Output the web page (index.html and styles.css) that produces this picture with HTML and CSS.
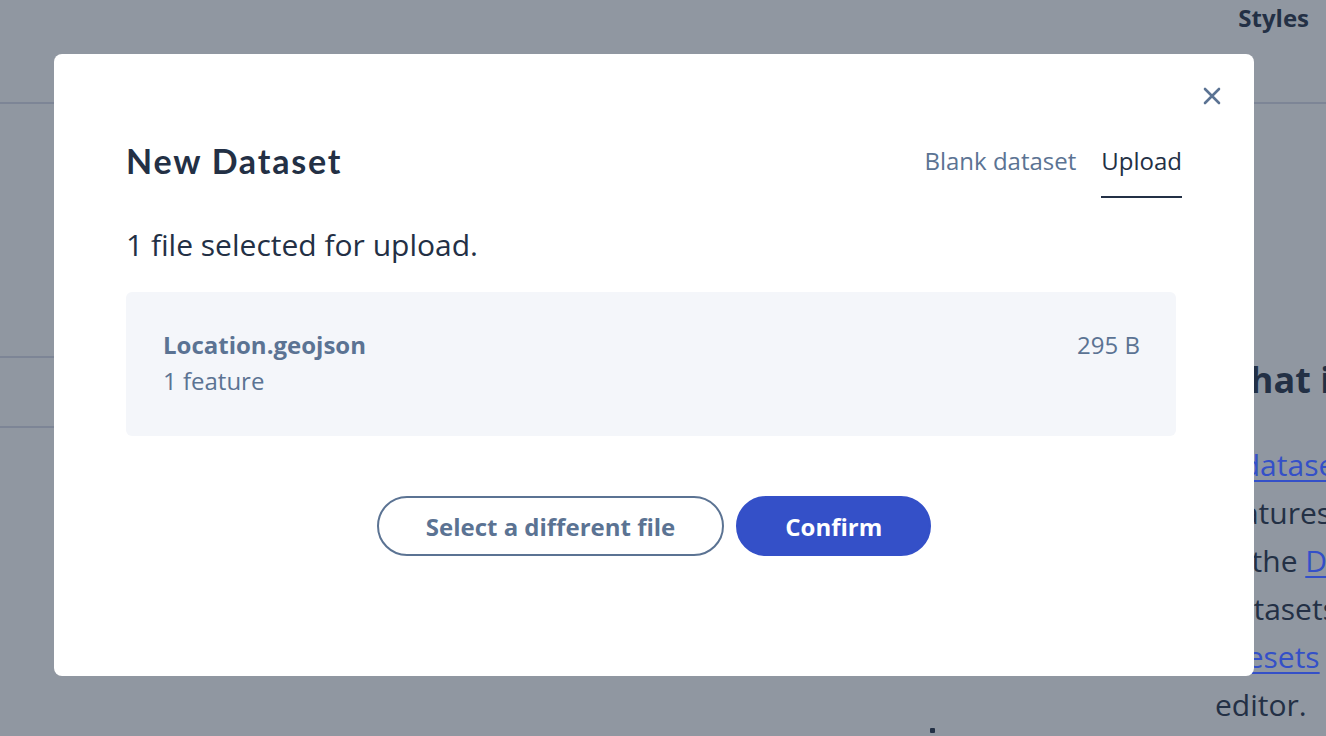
FILE: index.html
```html
<!DOCTYPE html>
<html lang="en">
<head>
<meta charset="utf-8">
<title>New Dataset</title>
<link rel="stylesheet" href="styles.css">
</head>
<body>
<div class="page">
  <header class="topbar">
    <div class="topbar-label">Styles</div>
  </header>
  <div class="layout">
    <aside class="sidebar">
      <div class="side-row side-row-a"></div>
      <div class="side-row side-row-b"></div>
    </aside>
    <main class="main">
      <span class="dot"></span>
    </main>
    <article class="doc">
      <h2 class="doc-title">What is a dataset?</h2>
      <p class="doc-text">
        <span class="doc-line">A <a href="#">dataset</a> is an editable collection of</span>
        <span class="doc-line">features and their properties.</span>
        <span class="doc-line">to the <a href="#">Datasets page</a></span>
        <span class="doc-line">Datasets can be exported</span>
        <span class="doc-line"><a href="#">Tilesets</a></span>
        <span class="doc-line">editor.</span>
      </p>
    </article>
  </div>
</div>

<div class="backdrop">
  <div class="modal" role="dialog" aria-labelledby="modal-title">
    <button class="close" aria-label="Close">
      <svg width="18" height="18" viewBox="0 0 18 18" aria-hidden="true">
        <path d="M2 2 L16 16 M16 2 L2 16" stroke="currentColor" stroke-width="2.6" stroke-linecap="round" fill="none"/>
      </svg>
    </button>
    <div class="modal-head">
      <h1 class="modal-title" id="modal-title">New Dataset</h1>
      <nav class="tabs">
        <span class="tab">Blank dataset</span>
        <span class="tab tab-active">Upload</span>
      </nav>
    </div>
    <p class="selected">1 file selected for upload.</p>
    <div class="file-box">
      <div class="file-info">
        <div class="file-name">Location.geojson</div>
        <div class="file-meta">1 feature</div>
      </div>
      <div class="file-size">295 B</div>
    </div>
    <div class="actions">
      <button class="btn btn-outline">Select a different file</button>
      <button class="btn btn-primary">Confirm</button>
    </div>
  </div>
</div>
</body>
</html>
```

FILE: styles.css
```css
* {
  box-sizing: border-box;
}

html, body {
  margin: 0;
  padding: 0;
  height: 100%;
  overflow: hidden;
}

body {
  font-family: "Open Sans", "Liberation Sans", sans-serif;
  color: #233045;
  background: #9097a1;
}

.page {
  height: 100vh;
  display: flex;
  flex-direction: column;
  background: #9097a1;
}

.topbar {
  height: 104px;
  flex: none;
  border-bottom: 2px solid #7d8596;
  display: flex;
  justify-content: flex-end;
  align-items: flex-start;
  padding: 0 17px 0 0;
}

.topbar-label {
  font-weight: 700;
  font-size: 24px;
  line-height: 36px;
  color: #233045;
}

.layout {
  flex: 1;
  display: flex;
  min-height: 0;
}

.sidebar {
  width: 320px;
  flex: none;
}

.side-row {
  border-bottom: 2px solid #7d8596;
}

.side-row-a {
  height: 254px;
}

.side-row-b {
  height: 70px;
}

.main {
  flex: 1;
  display: flex;
  align-items: flex-end;
  padding: 0 0 3px 610px;
}

.dot {
  width: 5px;
  height: 5px;
  background: #233045;
  border-radius: 1px;
}

.doc {
  width: 111px;
  flex: none;
  overflow: hidden;
  white-space: nowrap;
}

.doc-title {
  margin: 254px 0 0 0;
  font-size: 36px;
  line-height: 44px;
  font-weight: 700;
  color: #233045;
}

.doc-text {
  margin: 39px 0 0 0;
  font-size: 30px;
  line-height: 48px;
  color: #233045;
}

.doc-line {
  display: block;
}

.doc-text a {
  color: #3450c8;
  text-decoration: underline;
  text-decoration-thickness: 2px;
  text-underline-offset: 4px;
}

/* modal */
.backdrop {
  position: fixed;
  inset: 0;
  padding: 54px 72px 60px 54px;
}

.modal {
  position: relative;
  height: 100%;
  background: #ffffff;
  border-radius: 8px;
  padding: 89px 72px 0 72px;
}

.close {
  position: absolute;
  top: 33px;
  right: 33px;
  width: 18px;
  height: 18px;
  padding: 0;
  border: 0;
  background: none;
  color: #5b7393;
  display: flex;
}

.modal-head {
  display: flex;
  justify-content: space-between;
  align-items: flex-start;
}

.modal-title {
  margin: 0;
  font-family: "Lato", "Open Sans", sans-serif;
  font-weight: 700;
  font-size: 34px;
  line-height: 36px;
  color: #233045;
  letter-spacing: 1.8px;
}

.tabs {
  display: flex;
  gap: 25px;
}

.tab {
  font-size: 24px;
  line-height: 36px;
  padding-bottom: 17px;
  color: #5b7393;
  border-bottom: 2px solid transparent;
}

.tab-active {
  color: #233045;
  border-bottom-color: #233045;
}

.selected {
  margin: 29px 0 0 0;
  font-size: 30px;
  line-height: 36px;
  color: #233045;
}

.file-box {
  margin-top: 29px;
  width: 1050px;
  height: 144px;
  background: #f4f6fa;
  border-radius: 6px;
  padding: 35px 36px 0 37px;
  display: flex;
  justify-content: space-between;
  align-items: flex-start;
  color: #5b7393;
}

.file-name {
  font-weight: 700;
  font-size: 24px;
  line-height: 36px;
}

.file-meta {
  font-size: 24px;
  line-height: 36px;
}

.file-size {
  font-size: 24px;
  line-height: 36px;
}

.actions {
  margin-top: 60px;
  display: flex;
  justify-content: center;
  gap: 12px;
}

.btn {
  height: 60px;
  border-radius: 30px;
  font-family: "Open Sans", "Liberation Sans", sans-serif;
  font-weight: 700;
  font-size: 24px;
  padding: 0 47px;
  cursor: pointer;
}

.btn-outline {
  background: #ffffff;
  color: #5b7393;
  border: 2px solid #5b7393;
}

.btn-primary {
  background: #3450c8;
  color: #ffffff;
  border: 2px solid #3450c8;
}
```
